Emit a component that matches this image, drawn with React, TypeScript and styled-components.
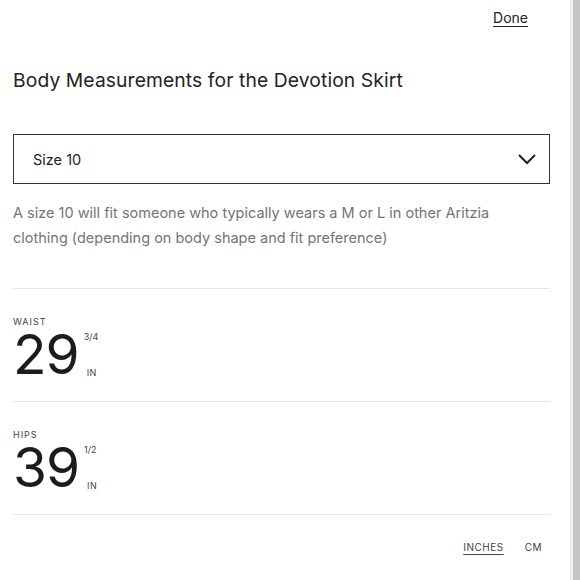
import styled, { createGlobalStyle } from "styled-components";

const GlobalStyle = createGlobalStyle`
  html, body {
    margin: 0;
    padding: 0;
    background: #ffffff;
  }
  body {
    font-family: Inter, "Noto Sans", sans-serif;
    color: #222222;
  }
`;

const StyledFrame = styled.div`
  display: flex;
  width: 580px;
  height: 580px;
  overflow: hidden;
`;

const StyledPanel = styled.div`
  flex: 1;
  padding: 0 20px 0 13px;
  display: flex;
  flex-direction: column;
`;

const StyledScrollTrack = styled.div`
  width: 7px;
  background: #c4c4c4;
  border-left: 3px solid #efefef;
`;

const StyledTopBar = styled.div`
  display: flex;
  justify-content: flex-end;
  padding: 9px 22px 0 0;
  height: 31px;
`;

const StyledDoneLink = styled.a`
  font-size: 14px;
  color: #222222;
  text-decoration: underline;
  text-underline-offset: 3px;
  cursor: pointer;
`;

const StyledTitle = styled.h1`
  margin: 28px 0 0;
  font-size: 19.3px;
  font-weight: 400;
  color: #222222;
  letter-spacing: 0.1px;
`;

const StyledSelect = styled.div`
  margin-top: 42px;
  height: 48px;
  border: 1px solid #333333;
  display: flex;
  align-items: center;
  justify-content: space-between;
  padding: 0 12px 0 19px;
  font-size: 14.5px;
  color: #222222;
`;

const StyledNote = styled.p`
  margin: 16px 0 0;
  max-width: 500px;
  font-size: 14.5px;
  line-height: 25px;
  color: #747474;
`;

const StyledMeasure = styled.div`
  margin-top: 38px;
  border-top: 1px solid #e6e6e6;
  display: flex;
  flex-direction: column;
`;

const StyledRow = styled.div`
  height: 113px;
  border-bottom: 1px solid #e6e6e6;
  padding-top: 27px;
  box-sizing: border-box;
`;

const StyledLabel = styled.div`
  font-size: 9px;
  line-height: 11px;
  letter-spacing: 1px;
  color: #444444;
  text-transform: uppercase;
`;

const StyledValue = styled.div`
  display: flex;
  align-items: stretch;
`;

const StyledNumber = styled.span`
  font-size: 55px;
  line-height: 55px;
  font-weight: 400;
  color: #1c1c1c;
  letter-spacing: -1px;
`;

const StyledFraction = styled.div`
  display: flex;
  flex-direction: column;
  justify-content: space-between;
  margin-left: 5px;
  padding: 4px 0 4px;
  font-size: 9px;
  line-height: 11px;
  color: #444444;
`;

const StyledUnit = styled.span<{ $shift: number }>`
  margin-left: ${(p) => p.$shift}px;
  letter-spacing: 0.5px;
`;

const StyledUnits = styled.div`
  display: flex;
  justify-content: flex-end;
  gap: 21px;
  padding: 26px 8px 0 0;
  font-size: 10px;
  letter-spacing: 0.5px;
`;

const StyledUnitOption = styled.span<{ $active?: boolean }>`
  color: #444444;
  text-decoration: ${(p) => (p.$active ? "underline" : "none")};
  text-underline-offset: 3px;
`;

const measurements = [
  { label: "Waist", whole: "29", fraction: "3/4" },
  { label: "Hips", whole: "39", fraction: "1/2" },
];

export default function App() {
  return (
    <>
      <GlobalStyle />
      <StyledFrame>
        <StyledPanel>
          <StyledTopBar>
            <StyledDoneLink>Done</StyledDoneLink>
          </StyledTopBar>
          <StyledTitle>Body Measurements for the Devotion Skirt</StyledTitle>
          <StyledSelect>
            <span>Size 10</span>
            <svg width="20" height="12" viewBox="0 0 20 12" fill="none">
              <path d="M2 2 L10 10 L18 2" stroke="#222" strokeWidth="2" />
            </svg>
          </StyledSelect>
          <StyledNote>
            A size 10 will fit someone who typically wears a M or L in other
            Aritzia clothing (depending on body shape and fit preference)
          </StyledNote>
          <StyledMeasure>
            {measurements.map((m) => (
              <StyledRow key={m.label}>
                <StyledLabel>{m.label}</StyledLabel>
                <StyledValue>
                  <StyledNumber>{m.whole}</StyledNumber>
                  <StyledFraction>
                    <span>{m.fraction}</span>
                    <StyledUnit $shift={3}>IN</StyledUnit>
                  </StyledFraction>
                </StyledValue>
              </StyledRow>
            ))}
          </StyledMeasure>
          <StyledUnits>
            <StyledUnitOption $active>INCHES</StyledUnitOption>
            <StyledUnitOption>CM</StyledUnitOption>
          </StyledUnits>
        </StyledPanel>
        <StyledScrollTrack />
      </StyledFrame>
    </>
  );
}
